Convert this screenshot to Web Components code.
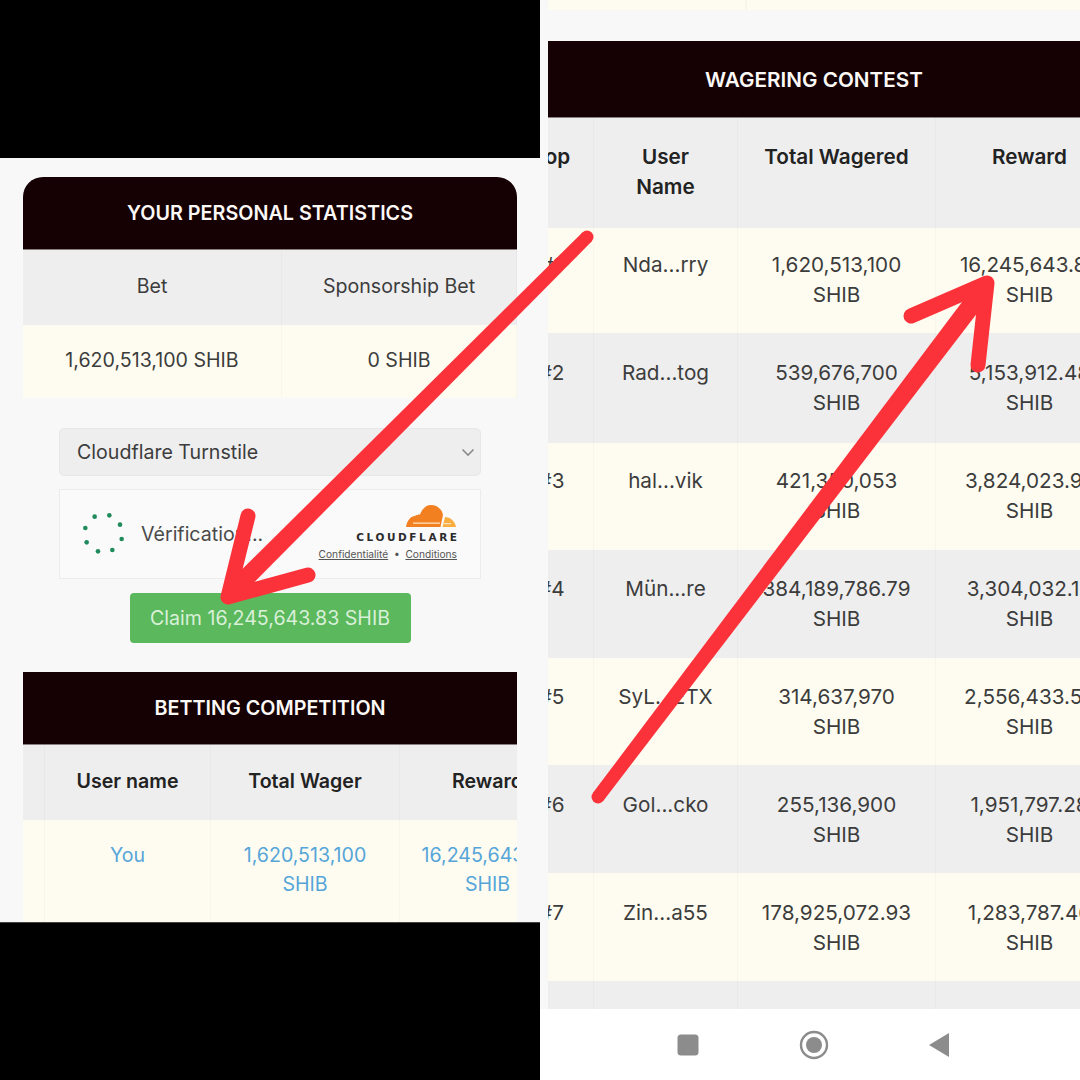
<!DOCTYPE html>
<html lang="en">
<head>
<meta charset="utf-8">
<title>Claim</title>
<style>
  html, body { margin: 0; background: #000; }
  body { font-family: Inter, "Noto Sans", sans-serif; }
</style>
</head>
<body>

<collage-page>
  <phone-left slot="left">
    <section-card title="YOUR PERSONAL STATISTICS" rounded style="--cols:259px 235px; margin-top:19px">
      <data-row tone="grey" style="--h:75px; --pad:22px"><data-cell>Bet</data-cell><data-cell>Sponsorship Bet</data-cell></data-row>
      <data-row tone="cream" style="--h:73px; --pad:21px"><data-cell>1,620,513,100 SHIB</data-cell><data-cell>0 SHIB</data-cell></data-row>
    </section-card>
    <captcha-box></captcha-box>
    <claim-button>Claim 16,245,643.83 SHIB</claim-button>
    <section-card title="BETTING COMPETITION" style="--cols:22px 166px 189px 176px; margin-top:29px">
      <data-row tone="grey" style="--h:75px; --pad:22px; --weight:600; --ink:#222"><data-cell></data-cell><data-cell>User name</data-cell><data-cell>Total Wager</data-cell><data-cell>Reward</data-cell></data-row>
      <data-row tone="cream" style="--h:108px; --pad:21px; --ink:#55a5d9"><data-cell></data-cell><data-cell>You</data-cell><data-cell>1,620,513,100<br>SHIB</data-cell><data-cell>16,245,643.83<br>SHIB</data-cell></data-row>
    </section-card>
  </phone-left>

  <phone-right slot="right">
    <data-row tone="cream" style="--cols:198px 1px 334px; --h:10px; --pad:0px"><data-cell></data-cell><data-cell></data-cell><data-cell></data-cell></data-row>
    <section-card title="WAGERING CONTEST" wide style="--cols:84px 144px 198px 188px; --shift:-38px; --fs:20.7px; --lh:30px; margin-top:31px">
      <data-row tone="grey" style="--h:110px; --pad:24px; --weight:600; --ink:#222"><data-cell>Top</data-cell><data-cell>User<br>Name</data-cell><data-cell>Total Wagered</data-cell><data-cell>Reward</data-cell></data-row>
      <data-row tone="cream" style="--h:105px; --pad:22px"><data-cell>#1</data-cell><data-cell>Nda...rry</data-cell><data-cell>1,620,513,100<br>SHIB</data-cell><data-cell>16,245,643.83<br>SHIB</data-cell></data-row>
      <data-row tone="grey" style="--h:110px; --pad:25px"><data-cell>#2</data-cell><data-cell>Rad...tog</data-cell><data-cell>539,676,700<br>SHIB</data-cell><data-cell>5,153,912.48<br>SHIB</data-cell></data-row>
      <data-row tone="cream" style="--h:107px; --pad:23px"><data-cell>#3</data-cell><data-cell>hal...vik</data-cell><data-cell>421,350,053<br>SHIB</data-cell><data-cell>3,824,023.97<br>SHIB</data-cell></data-row>
      <data-row tone="grey" style="--h:108px; --pad:24px"><data-cell>#4</data-cell><data-cell>Mün...re</data-cell><data-cell>384,189,786.79<br>SHIB</data-cell><data-cell>3,304,032.16<br>SHIB</data-cell></data-row>
      <data-row tone="cream" style="--h:107px; --pad:24px"><data-cell>#5</data-cell><data-cell>SyL...ETX</data-cell><data-cell>314,637,970<br>SHIB</data-cell><data-cell>2,556,433.55<br>SHIB</data-cell></data-row>
      <data-row tone="grey" style="--h:108px; --pad:25px"><data-cell>#6</data-cell><data-cell>Gol...cko</data-cell><data-cell>255,136,900<br>SHIB</data-cell><data-cell>1,951,797.28<br>SHIB</data-cell></data-row>
      <data-row tone="cream" style="--h:108px; --pad:25px"><data-cell>#7</data-cell><data-cell>Zin...a55</data-cell><data-cell>178,925,072.93<br>SHIB</data-cell><data-cell>1,283,787.46<br>SHIB</data-cell></data-row>
      <data-row tone="grey" style="--h:28px; --pad:0px"><data-cell></data-cell><data-cell></data-cell><data-cell></data-cell><data-cell></data-cell></data-row>
    </section-card>
    <nav-bar></nav-bar>
  </phone-right>

  <red-arrows slot="over"></red-arrows>
</collage-page>

<script>
class CollagePage extends HTMLElement {
  constructor() {
    super();
    this.attachShadow({mode: "open"});
    this.shadowRoot.innerHTML = `
      <style>
        :host { display: grid; grid-template-columns: 540px 540px; width: 1080px; height: 1080px; position: relative; overflow: hidden; background: #000; }
      </style>
      <slot name="left"></slot>
      <slot name="right"></slot>
      <slot name="over"></slot>
    `;
  }
}

class PhoneLeft extends HTMLElement {
  constructor() {
    super();
    this.attachShadow({mode: "open"});
    this.shadowRoot.innerHTML = `
      <style>
        :host { display: block; height: 765px; margin-top: 158px; background: #f8f8f8; overflow: hidden; border-bottom: 1px solid #444; box-sizing: border-box; }
        .inner { display: flex; flex-direction: column; padding: 0 23px; }
      </style>
      <div class="inner"><slot></slot></div>
    `;
  }
}

class PhoneRight extends HTMLElement {
  constructor() {
    super();
    this.attachShadow({mode: "open"});
    this.shadowRoot.innerHTML = `
      <style>
        :host { display: flex; flex-direction: column; height: 1080px; background: #f8f8f8; overflow: hidden; padding-left: 8px; box-sizing: border-box; position: relative; }
        .inner { height: 1009px; overflow: hidden; flex: none; }
      </style>
      <div class="inner"><slot></slot></div>
    `;
  }
}

class SectionCard extends HTMLElement {
  constructor() {
    super();
    this.attachShadow({mode: "open"});
    const title = this.getAttribute("title") || "";
    this.removeAttribute("title");
    this.shadowRoot.innerHTML = `
      <style>
        :host { display: block; overflow: hidden; }
        .head {
          height: 72px; display: flex; align-items: center; justify-content: center;
          background: #150003; color: #fbf8f6; font-size: var(--fs, 19.75px); font-weight: 600;
          border-bottom: 1px solid #8a7f7f; white-space: nowrap;
        }
        :host([rounded]) .head { border-radius: 20px 20px 0 0; }
        :host([wide]) .head { height: 76px; width: 532px; }
        .rows { margin-left: var(--shift, 0); }
      </style>
      <div class="head">${title}</div>
      <div class="rows"><slot></slot></div>
    `;
  }
}

class DataRow extends HTMLElement {
  constructor() {
    super();
    this.attachShadow({mode: "open"});
    this.shadowRoot.innerHTML = `
      <style>
        :host { display: grid; grid-template-columns: var(--cols); height: var(--h); width: max-content; overflow: hidden; color: var(--ink, #3c3c3c); font-weight: var(--weight, 400); }
        :host([tone="grey"]) { background: #eeeeef; }
        :host([tone="cream"]) { background: #fefcf0; }
      </style>
      <slot></slot>
    `;
  }
}

class DataCell extends HTMLElement {
  constructor() {
    super();
    this.attachShadow({mode: "open"});
    this.shadowRoot.innerHTML = `
      <style>
        :host { display: block; box-sizing: border-box; padding-top: var(--pad, 24px); border-right: 1px solid rgba(0,0,0,.025); text-align: center; font-size: var(--fs, 19.6px); line-height: var(--lh, 29px); white-space: nowrap; min-width: 0; }
      </style>
      <slot></slot>
    `;
  }
}

class CaptchaBox extends HTMLElement {
  constructor() {
    super();
    this.attachShadow({mode: "open"});
    const dots = [[104,80],[148,76],[180,104],[185,147],[157,180],[114,184],[80,157],[76,114]]
      .map(d => `<circle cx="${d[0] / 3 - 16}" cy="${d[1] / 3 - 17}" r="2.3"/>`).join("");
    this.shadowRoot.innerHTML = `
      <style>
        :host { display: block; margin: 30px 36px 0; }
        .select {
          height: 48px; box-sizing: border-box; display: flex; align-items: center; justify-content: space-between;
          padding: 0 5px 0 17px; background: #eeeeee; border: 1px solid #e8e8e8; border-radius: 5px;
          font-size: 19.6px; color: #3c3c3c;
        }
        .widget {
          margin-top: 13px; height: 90px; box-sizing: border-box; display: flex; align-items: center; justify-content: space-between;
          padding: 0 23px 0 16px; background: #fafafa; border: 1px solid #ececec; color: #4a4a4a;
        }
        .left { display: flex; align-items: center; gap: 11px; font-size: 19.6px; }
        .right { display: flex; flex-direction: column; align-items: flex-end; padding-bottom: 4px; }
        .word { font: 700 10.5px/11px "DejaVu Sans", sans-serif; letter-spacing: 2.6px; color: #2b2b2e; margin: 4px -2.6px 0 0; }
        .links { font-size: 10.2px; line-height: 14px; margin-top: 4px; white-space: nowrap; color: #555; }
        .links u { text-underline-offset: 1px; }
        svg { display: block; }
      </style>
      <div class="select">Cloudflare Turnstile
        <svg width="14" height="9" viewBox="0 0 14 9"><path d="M1.5 1.5 7 7l5.5-5.5" fill="none" stroke="#8a8a8a" stroke-width="1.6"/></svg>
      </div>
      <div class="widget">
        <div class="left">
          <svg width="54" height="54" viewBox="0 0 54 54" fill="#1f8a5b">${dots}</svg>
          <span>Vérification...</span>
        </div>
        <div class="right">
          <svg width="52" height="24" viewBox="0 0 52 24">
            <path fill="#f38020" d="M1 23C2 17 5 12.500 10 12C11 11 13 10.500 15 10.500C17 5 21 1 26 1C32 1 37 5 38 11L35.500 23Z"/>
            <path fill="#faae40" d="M37.500 23L40 13C45 13 50 17 51 23Z"/>
            <path fill="#fbe3c0" d="M8 18.500h27v1.200H8zM39 19h7v1.200h-7z"/>
          </svg>
          <div class="word">CLOUDFLARE</div>
          <div class="links"><u>Confidentialité</u> &nbsp;•&nbsp; <u>Conditions</u></div>
        </div>
      </div>
    `;
  }
}

class ClaimButton extends HTMLElement {
  constructor() {
    super();
    this.attachShadow({mode: "open"});
    this.shadowRoot.innerHTML = `
      <style>
        :host { display: flex; align-self: center; align-items: center; justify-content: center; width: 281px; height: 50px; margin-top: 14px; background: #5cb85c; border-radius: 4px; color: #d9f0d9; font-size: 19.6px; white-space: nowrap; }
      </style>
      <slot></slot>
    `;
  }
}

class NavBar extends HTMLElement {
  constructor() {
    super();
    this.attachShadow({mode: "open"});
    this.shadowRoot.innerHTML = `
      <style>
        :host { position: absolute; left: 0; right: 0; top: 1009px; height: 71px; background: #fff; display: flex; align-items: center; justify-content: center; gap: 96px; padding-left: 8px; box-sizing: border-box; }
        svg { display: block; }
      </style>
      <svg width="30" height="30" viewBox="0 0 30 30"><rect x="4.500" y="4.500" width="21" height="21" rx="3.500" fill="#8c8c8c"/></svg>
      <svg width="30" height="30" viewBox="0 0 30 30"><circle cx="15" cy="15" r="13" fill="none" stroke="#8c8c8c" stroke-width="2.400"/><circle cx="15" cy="15" r="8" fill="#8c8c8c"/></svg>
      <svg width="30" height="30" viewBox="0 0 30 30"><path d="M4 15 24 3v24Z" fill="#8c8c8c"/></svg>
    `;
  }
}

class RedArrows extends HTMLElement {
  constructor() {
    super();
    this.attachShadow({mode: "open"});
    this.shadowRoot.innerHTML = `
      <style>
        :host { position: absolute; inset: 0; pointer-events: none; }
        svg { display: block; }
      </style>
      <svg width="1080" height="1080" viewBox="0 0 1080 1080" fill="none" stroke="#fb3239" stroke-width="15" stroke-linecap="round" stroke-linejoin="round">
        <circle cx="587" cy="237" r="6.500" fill="#fb3239" stroke="none"/>
        <path fill="#fb3239" stroke="none" d="M591.600 241.600 236.400 600.400 223.600 587.600 582.400 232.400Z"/>
        <path d="M248 516 228 597 308 575"/>
        <circle cx="598" cy="797" r="6.500" fill="#fb3239" stroke="none"/>
        <path fill="#fb3239" stroke="none" d="M603.200 800.900 993.600 291.800 978.400 280.200 592.800 793.100Z"/>
        <path d="M911 316 987 283 978 365"/>
      </svg>
    `;
  }
}

customElements.define("collage-page", CollagePage);
customElements.define("phone-left", PhoneLeft);
customElements.define("phone-right", PhoneRight);
customElements.define("section-card", SectionCard);
customElements.define("data-row", DataRow);
customElements.define("data-cell", DataCell);
customElements.define("captcha-box", CaptchaBox);
customElements.define("claim-button", ClaimButton);
customElements.define("nav-bar", NavBar);
customElements.define("red-arrows", RedArrows);
</script>
</body>
</html>
